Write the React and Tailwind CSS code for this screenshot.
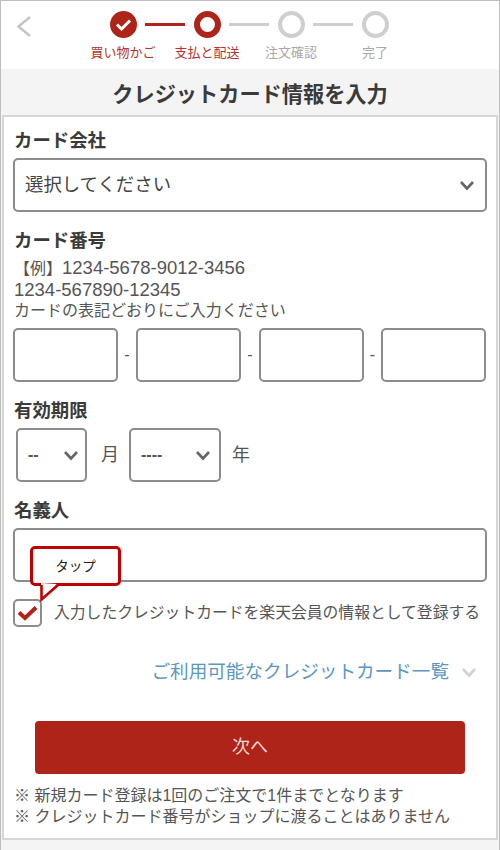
import React from 'react';

function Chevron({ className = '', color = '#666666' }) {
  return (
    <svg className={className} width="16" height="11" viewBox="0 0 16 11" fill="none">
      <path d="M2 2L8 8.5L14 2" stroke={color} strokeWidth="2.6" />
    </svg>
  );
}

function Step({ state, label }) {
  const active = state !== 'todo';
  return (
    <div className="relative flex w-[28px] justify-center">
      {state === 'done' && (
        <div className="flex h-[27px] w-[27px] items-center justify-center rounded-full bg-[#ae2418]">
          <svg width="17" height="13" viewBox="0 0 17 13" fill="none">
            <path d="M2 6.5L6.5 11L15 2.5" stroke="#ffffff" strokeWidth="3" />
          </svg>
        </div>
      )}
      {state === 'current' && <div className="h-[27px] w-[27px] rounded-full border-[6px] border-[#ae2418] bg-white" />}
      {state === 'todo' && <div className="h-[27px] w-[27px] rounded-full border-[4px] border-[#cfcfcf] bg-white" />}
      <span className={`absolute top-[33px] whitespace-nowrap text-[13px] leading-[18px] ${active ? 'text-[#b5362c]' : 'text-[#a8a8a8]'}`}>
        {label}
      </span>
    </div>
  );
}

function Line({ on }) {
  return <div className={`mx-[8px] h-[3px] w-[40px] ${on ? 'bg-[#ae2418]' : 'bg-[#cfcfcf]'}`} />;
}

function Label({ children, className = '' }) {
  return <div className={`ml-[1px] text-[18.4px] font-bold leading-[26px] text-[#3a3a3a] ${className}`}>{children}</div>;
}

function Box({ className = '', children }) {
  return (
    <div className={`flex h-[54px] items-center rounded-[5px] border-2 border-[#8c8c8c] bg-white ${className}`}>
      {children}
    </div>
  );
}

function Dash({ className = 'w-[18px]' }) {
  return <span className={`text-center text-[16px] text-[#555555] ${className}`}>-</span>;
}

export default function App() {
  return (
    <div
      className="h-[850px] w-[500px] overflow-hidden border-x border-t border-[#bdbdbd] bg-[#f4f4f4] text-[#444444]"
      style={{ fontFamily: '"Liberation Sans", "Noto Sans CJK JP", sans-serif' }}
    >
      {/* Header */}
      <div className="relative h-[68px] bg-white">
        <svg className="absolute left-[15px] top-[14px]" width="16" height="24" viewBox="0 0 16 24" fill="none">
          <path d="M14 2L2.5 11.5L14 21" stroke="#c4c4c4" strokeWidth="2.4" />
        </svg>
        <div className="ml-[108px] flex items-center pt-[10px]">
          <Step state="done" label="買い物かご" />
          <Line on />
          <Step state="current" label="支払と配送" />
          <Line />
          <Step state="todo" label="注文確認" />
          <Line />
          <Step state="todo" label="完了" />
        </div>
      </div>

      {/* Title */}
      <h1 className="h-[46px] text-center text-[21.2px] font-bold leading-[52px] text-[#3a3a3a]">クレジットカード情報を入力</h1>

      {/* Form card */}
      <div className="ml-[1px] h-[725px] w-[496px] border-2 border-[#d6d6d6] bg-white px-[9px] pt-[11px]">
        <Label>カード会社</Label>
        <Box className="mt-[4px] justify-between pl-[10px] pr-[10px] text-[18.4px] text-[#444444]">
          <span>選択してください</span>
          <Chevron />
        </Box>

        <Label className="mt-[16px]">カード番号</Label>
        <div className="ml-[1px] mt-[3px] text-[16px] text-[#555555]">
          <div className="leading-[22px]">【例】<span className="text-[18.5px]">1234-5678-9012-3456</span></div>
          <div className="text-[18.5px] leading-[20px]">1234-567890-12345</div>
          <div className="leading-[22px]">カードの表記どおりにご入力ください</div>
        </div>
        <div className="mt-[6px] flex items-center">
          <Box className="w-[105px]" />
          <Dash />
          <Box className="w-[105px]" />
          <Dash />
          <Box className="w-[105px]" />
          <Dash className="w-[17px]" />
          <Box className="w-[105px]" />
        </div>

        <Label className="mt-[16px]">有効期限</Label>
        <div className="ml-[3px] mt-[4px] flex items-center text-[#555555]">
          <Box className="w-[71px] justify-between pl-[10px] pr-[6px] text-[16px] font-bold">
            <span>--</span>
            <Chevron />
          </Box>
          <span className="ml-[14px] w-[28px] text-[18px]">月</span>
          <Box className="w-[92px] justify-between pl-[10px] pr-[8px] text-[16px] font-bold">
            <span>----</span>
            <Chevron />
          </Box>
          <span className="ml-[11px] text-[18px]">年</span>
        </div>

        <Label className="mt-[16px]">名義人</Label>
        <div className="relative mt-[4px]">
          <Box />
          {/* Tap callout */}
          <div className="absolute left-[17px] top-[18px] z-10 flex h-[40px] w-[91px] items-center justify-center rounded-[5px] border-[3px] border-[#c00000] bg-white pt-[2px] text-[13.5px] text-[#222222]">
            タップ
          </div>
          <svg className="absolute left-[24px] top-[54px] z-20" width="34" height="20" viewBox="0 0 34 20" fill="none">
            <path d="M4 1V17L20 2" fill="#ffffff" />
            <path d="M4.5 3V17.5L21 3" stroke="#c00000" strokeWidth="2.6" />
          </svg>
        </div>

        <div className="mt-[17px] flex items-center">
          <div className="flex h-[28px] w-[29px] items-center justify-center rounded-[5px] border-2 border-[#8c8c8c]">
            <svg width="21" height="16" viewBox="0 0 21 16" fill="none">
              <path d="M2 7.5L8 13L19 2.5" stroke="#ae2418" strokeWidth="4" />
            </svg>
          </div>
          <span className="ml-[12px] whitespace-nowrap text-[15.8px] text-[#555555]">入力したクレジットカードを楽天会員の情報として登録する</span>
        </div>

        <div className="mr-[10px] mt-[32px] flex items-center justify-end">
          <span className="text-[18.6px] leading-[26px] text-[#5c97c2]">ご利用可能なクレジットカード一覧</span>
          <Chevron className="ml-[12px]" color="#d2d2d2" />
        </div>

        <button className="ml-[22px] mt-[36px] flex h-[53px] w-[430px] items-center justify-center rounded-[4px] bg-[#ae2418] text-[18px] text-[#f3d6d3]">
          次へ
        </button>

        <div className="ml-[1px] mt-[11px] text-[16px] leading-[21px] text-[#555555]">
          <p>※ 新規カード登録は1回のご注文で1件までとなります</p>
          <p>※ クレジットカード番号がショップに渡ることはありません</p>
        </div>
      </div>
    </div>
  );
}
